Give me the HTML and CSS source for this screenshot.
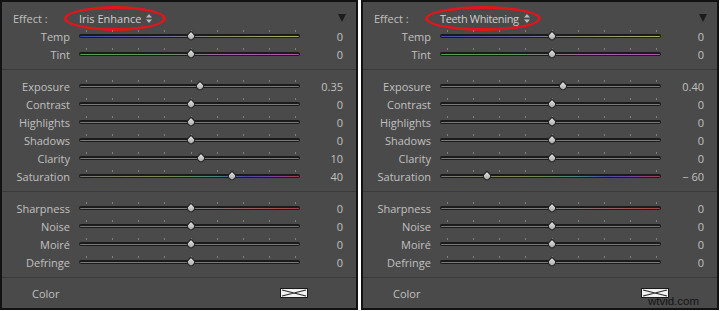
FILE: index.html
```html
<!DOCTYPE html>
<html lang="en">
<head>
    <meta charset="UTF-8">
    <meta name="viewport" content="width=device-width, initial-scale=1.0">
    <title>Effect presets</title>
    <link rel="stylesheet" href="styles.css">
</head>

<body>
    <div class="panels">

        <div class="panel">
            <div class="group">
                <div class="row effect">
                    <span class="label">Effect :</span>
                    <span class="pick">Iris Enhance <svg class="updown" width="6" height="9" viewBox="0 0 6 9"><path d="M3 0 L6 3.5 L0 3.5 Z M0 5.5 L6 5.5 L3 9 Z"/></svg></span>
                    <span class="collapse"></span>
                </div>
                <div class="row">
                    <span class="label">Temp</span>
                    <div class="slider temp"><span class="knob" style="left: 50.5%"></span></div>
                    <span class="value">0</span>
                </div>
                <div class="row">
                    <span class="label">Tint</span>
                    <div class="slider tint"><span class="knob" style="left: 50.5%"></span></div>
                    <span class="value">0</span>
                </div>
            </div>

            <div class="group">
                <div class="row">
                    <span class="label">Exposure</span>
                    <div class="slider"><span class="knob" style="left: 55%"></span></div>
                    <span class="value">0.35</span>
                </div>
                <div class="row">
                    <span class="label">Contrast</span>
                    <div class="slider"><span class="knob" style="left: 50.5%"></span></div>
                    <span class="value">0</span>
                </div>
                <div class="row">
                    <span class="label">Highlights</span>
                    <div class="slider"><span class="knob" style="left: 50.5%"></span></div>
                    <span class="value">0</span>
                </div>
                <div class="row">
                    <span class="label">Shadows</span>
                    <div class="slider"><span class="knob" style="left: 50.5%"></span></div>
                    <span class="value">0</span>
                </div>
                <div class="row">
                    <span class="label">Clarity</span>
                    <div class="slider"><span class="knob" style="left: 55.3%"></span></div>
                    <span class="value">10</span>
                </div>
                <div class="row">
                    <span class="label">Saturation</span>
                    <div class="slider sat"><span class="knob" style="left: 69.5%"></span></div>
                    <span class="value">40</span>
                </div>
            </div>

            <div class="group">
                <div class="row">
                    <span class="label">Sharpness</span>
                    <div class="slider sharp"><span class="knob" style="left: 50.5%"></span></div>
                    <span class="value">0</span>
                </div>
                <div class="row">
                    <span class="label">Noise</span>
                    <div class="slider"><span class="knob" style="left: 50.5%"></span></div>
                    <span class="value">0</span>
                </div>
                <div class="row">
                    <span class="label">Moiré</span>
                    <div class="slider"><span class="knob" style="left: 50.5%"></span></div>
                    <span class="value">0</span>
                </div>
                <div class="row">
                    <span class="label">Defringe</span>
                    <div class="slider"><span class="knob" style="left: 50.5%"></span></div>
                    <span class="value">0</span>
                </div>
            </div>

            <div class="group color-row">
                <span class="color-label">Color</span>
                <svg class="swatch" width="28" height="10" viewBox="0 0 28 10">
                    <rect x="0.5" y="0.5" width="27" height="9" fill="#f2f2f2" stroke="#1a1a1a"/>
                    <path d="M2 2 L14 5 L26 2 M2 8 L14 5 L26 8" fill="none" stroke="#2a2a2a" stroke-width="1.2"/>
                </svg>
            </div>
        </div>

        <div class="panel">
            <div class="group">
                <div class="row effect">
                    <span class="label">Effect :</span>
                    <span class="pick wide">Teeth Whitening <svg class="updown" width="6" height="9" viewBox="0 0 6 9"><path d="M3 0 L6 3.5 L0 3.5 Z M0 5.5 L6 5.5 L3 9 Z"/></svg></span>
                    <span class="collapse"></span>
                </div>
                <div class="row">
                    <span class="label">Temp</span>
                    <div class="slider temp"><span class="knob" style="left: 50.5%"></span></div>
                    <span class="value">0</span>
                </div>
                <div class="row">
                    <span class="label">Tint</span>
                    <div class="slider tint"><span class="knob" style="left: 50.5%"></span></div>
                    <span class="value">0</span>
                </div>
            </div>

            <div class="group">
                <div class="row">
                    <span class="label">Exposure</span>
                    <div class="slider"><span class="knob" style="left: 55.5%"></span></div>
                    <span class="value">0.40</span>
                </div>
                <div class="row">
                    <span class="label">Contrast</span>
                    <div class="slider"><span class="knob" style="left: 50.5%"></span></div>
                    <span class="value">0</span>
                </div>
                <div class="row">
                    <span class="label">Highlights</span>
                    <div class="slider"><span class="knob" style="left: 50.5%"></span></div>
                    <span class="value">0</span>
                </div>
                <div class="row">
                    <span class="label">Shadows</span>
                    <div class="slider"><span class="knob" style="left: 50.5%"></span></div>
                    <span class="value">0</span>
                </div>
                <div class="row">
                    <span class="label">Clarity</span>
                    <div class="slider"><span class="knob" style="left: 50.5%"></span></div>
                    <span class="value">0</span>
                </div>
                <div class="row">
                    <span class="label">Saturation</span>
                    <div class="slider sat"><span class="knob" style="left: 21%"></span></div>
                    <span class="value">− 60</span>
                </div>
            </div>

            <div class="group">
                <div class="row">
                    <span class="label">Sharpness</span>
                    <div class="slider sharp"><span class="knob" style="left: 50.5%"></span></div>
                    <span class="value">0</span>
                </div>
                <div class="row">
                    <span class="label">Noise</span>
                    <div class="slider"><span class="knob" style="left: 50.5%"></span></div>
                    <span class="value">0</span>
                </div>
                <div class="row">
                    <span class="label">Moiré</span>
                    <div class="slider"><span class="knob" style="left: 50.5%"></span></div>
                    <span class="value">0</span>
                </div>
                <div class="row">
                    <span class="label">Defringe</span>
                    <div class="slider"><span class="knob" style="left: 50.5%"></span></div>
                    <span class="value">0</span>
                </div>
            </div>

            <div class="group color-row">
                <span class="color-label">Color</span>
                <svg class="swatch" width="28" height="10" viewBox="0 0 28 10">
                    <rect x="0.5" y="0.5" width="27" height="9" fill="#f2f2f2" stroke="#1a1a1a"/>
                    <path d="M2 2 L14 5 L26 2 M2 8 L14 5 L26 8" fill="none" stroke="#2a2a2a" stroke-width="1.2"/>
                </svg>
            </div>

            <span class="watermark">wtvid.com</span>
        </div>

    </div>
</body>

</html>
```

FILE: styles.css
```css
body {
    margin: 0;
    background-color: #fff;
    font-family: "Open Sans", "DejaVu Sans", sans-serif;
    font-size: 11px;
}

.panels {
    display: flex;
    gap: 3px;
}

.panel {
    position: relative;
    width: 358px;
    height: 310px;
    box-sizing: border-box;
    border: 2px solid #121212;
    background-color: #4a4a4a;
    color: #c0c0c0;
    padding-top: 7px;
}

/* sections split by a thin groove */
.group {
    padding: 7px 0 6px;
}

.group:first-child {
    padding-top: 0;
}

.group + .group {
    border-top: 1px solid #3a3a3a;
}

.row {
    display: grid;
    grid-template-columns: 77px 221px 43px;
    align-items: center;
    height: 18px;
}

.label {
    text-align: right;
    padding-right: 9px;
}

.value {
    text-align: right;
}

/* effect picker row */
.effect .label {
    text-align: left;
    padding-left: 11px;
}

.pick {
    justify-self: start;
    display: inline-flex;
    align-items: center;
    gap: 5px;
    margin: -4px 0 -4px -15px;
    padding: 2px 11px 2px 12px;
    border: 3px solid #e2151c;
    border-radius: 50%;
    color: #d0d0d0;
    white-space: nowrap;
}

.pick.wide {
    letter-spacing: -0.35px;
    padding-right: 8px;
}

.updown {
    fill: #b8b8b8;
}

.collapse {
    justify-self: end;
    margin-right: -3px;
    width: 0;
    height: 0;
    border-left: 4.5px solid transparent;
    border-right: 4.5px solid transparent;
    border-top: 8px solid #1c1c1c;
}

/* slider track */
.slider {
    position: relative;
    height: 4px;
    box-sizing: border-box;
    border: 1px solid #1b1b1b;
    border-top-width: 2px;
    border-radius: 2px;
    background: #7a7a7a;
}

.slider::before {
    content: "";
    position: absolute;
    left: 6px;
    top: -6px;
    width: 210px;
    height: 2px;
    background: repeating-linear-gradient(90deg, #808080 0 1px, transparent 1px 26.125px);
}

.slider.temp {
    background: linear-gradient(90deg, #4848b0, #6a6a98 35%, #8c8c7c 60%, #b2b25c);
}

.slider.tint {
    background: linear-gradient(90deg, #4ea64e, #7a8a7a 45%, #9a6c9a 65%, #b452b4);
}

.slider.sat {
    background: linear-gradient(90deg, #787878, #86865e 30%, #6a8a5a 48%, #4e8480 62%, #4a4aa6 76%, #7446a2 88%, #ac3e4e);
}

.slider.sharp {
    background: linear-gradient(90deg, #7a7a7a 60%, #a84444);
}

/* teardrop thumb */
.knob {
    position: absolute;
    top: 50%;
    width: 8px;
    height: 8px;
    box-sizing: border-box;
    border: 1px solid #262626;
    border-radius: 0 50% 50% 50%;
    background: linear-gradient(135deg, #e4e4e4, #a4a4a4);
    transform: translate(-50%, -60%) rotate(45deg);
}

/* color row */
.color-row {
    display: flex;
    align-items: center;
    height: 18px;
    padding: 6px 48px 0 30px;
}

.swatch {
    display: block;
    margin-left: auto;
}

.watermark {
    position: absolute;
    right: 18px;
    bottom: 1px;
    font-family: "Liberation Sans", Arial, sans-serif;
    font-size: 11.5px;
    color: #141414;
}
```
